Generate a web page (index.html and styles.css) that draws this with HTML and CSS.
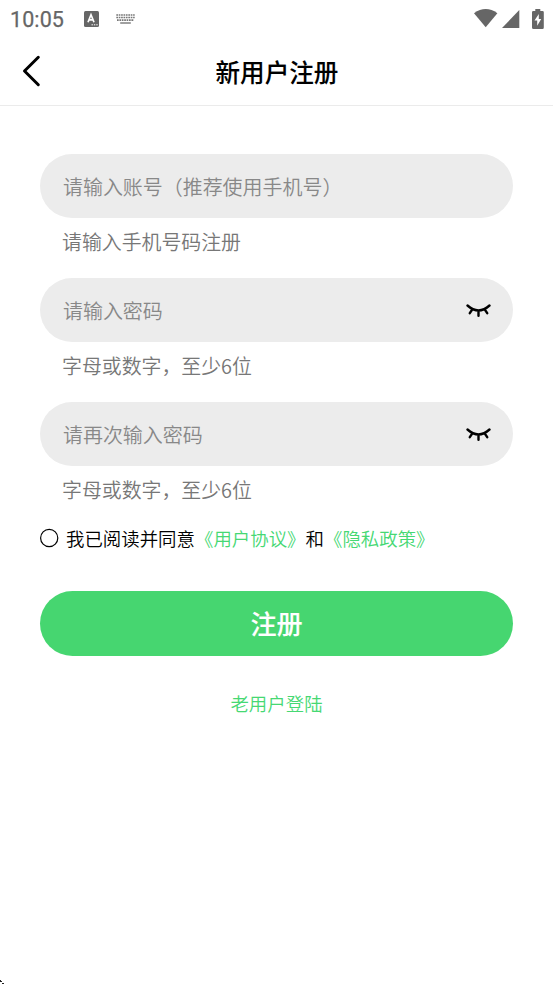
FILE: index.html
```html
<!DOCTYPE html>
<html lang="zh-CN">
<head>
<meta charset="utf-8">
<title>新用户注册</title>
<link rel="stylesheet" href="styles.css">
</head>
<body>
<div class="screen">
  <div class="status">
    <span class="clock">10:05</span>
    <svg class="ime" width="15" height="16" viewBox="0 0 15 16"><rect width="15" height="16" rx="1.5" fill="#666"/><path d="M4 11.3 7 3.8 10 11.3M5.2 8.8h3.6" fill="none" stroke="#fff" stroke-width="1.7"/><path d="M7.5 13.8h1.4m1 0h1.4m1 0h1.4" stroke="#fff"/></svg>
    <svg class="keys" width="19" height="10" viewBox="0 0 19 10" fill="none" stroke="#777"><path d="M.3 1h18.4M.3 3.5h18.4M1 6.1h17" stroke-width="1.6" stroke-dasharray="1.7 .7"/><path d="M4.2 9h10.6" stroke-width="1.4"/></svg>
    <svg class="wifi" width="24" height="19" viewBox="0 0 24 19"><path d="M0 4.2Q11.7-4.2 23.4 4.2L11.7 18.3Z" fill="#666"/></svg>
    <svg class="signal" width="18" height="18" viewBox="0 0 18 18"><path d="M17.3 0v18H0Z" fill="#666"/></svg>
    <svg class="battery" width="12" height="20" viewBox="0 0 12 20"><path d="M3.3 0h5v2H10.5Q11.8 2 11.8 3.2V18.5Q11.8 20 10.5 20H1.5Q0 20 0 18.5V3.2Q0 2 1.3 2h2Z" fill="#666"/><path d="M6.8 5 2.5 11.5h2.7v5.2L9.2 10H6.8Z" fill="#fff"/></svg>
  </div>
  <header class="bar">
    <svg class="back" width="20" height="32" viewBox="0 0 20 32"><path d="M16.3 2.3 2.5 16l13.8 13.7" fill="none" stroke="#000" stroke-width="3" stroke-linecap="round" stroke-linejoin="round"/></svg>
    <h1>新用户注册</h1>
  </header>
  <main>
    <div class="field"><span>请输入账号（推荐使用手机号）</span></div>
    <p class="hint">请输入手机号码注册</p>
    <div class="field"><span>请输入密码</span><svg class="eye" width="25" height="14" viewBox="0 0 25 14"><path d="M1.5 1.5Q12.5 11.3 23.5 1.5M6 5.8 3.8 9.2M12.5 6.7V11.7M19 5.8 21.2 9.2" fill="none" stroke="#000" stroke-width="2.4" stroke-linecap="round"/></svg></div>
    <p class="hint">字母或数字，至少6位</p>
    <div class="field"><span>请再次输入密码</span><svg class="eye" width="25" height="14" viewBox="0 0 25 14"><path d="M1.5 1.5Q12.5 11.3 23.5 1.5M6 5.8 3.8 9.2M12.5 6.7V11.7M19 5.8 21.2 9.2" fill="none" stroke="#000" stroke-width="2.4" stroke-linecap="round"/></svg></div>
    <p class="hint">字母或数字，至少6位</p>
    <div class="agree">
      <svg width="19" height="20" viewBox="0 0 19 20"><circle cx="9.2" cy="10" r="8.6" fill="none" stroke="#000" stroke-width="1.2"/></svg>
      <span>我已阅读并同意<a>《用户协议》</a>和<a>《隐私政策》</a></span>
    </div>
    <div class="submit">注册</div>
    <a class="login">老用户登陆</a>
  </main>
  <svg class="corner" width="4" height="4" viewBox="0 0 4 4"><path d="M0 0h1v1h1v1H0ZM2 3h2v1H2Z" fill="#222"/></svg>
</div>
</body>
</html>
```
FILE: styles.css
```css
* { box-sizing: border-box; }
body {
  margin: 0;
  background: #fff;
  color: #000;
  font-family: "Noto Sans CJK SC", sans-serif;
  font-weight: 350;
}
.screen {
  position: relative;
  height: 984px;
  overflow: hidden;
}
.status {
  display: flex;
  align-items: center;
  height: 37px;
  padding: 0 10px;
}
.clock {
  width: 74px;
  padding-top: 1px;
  color: #666;
  font: 400 21.5px/37px Roboto, sans-serif;
  letter-spacing: .1px;
  -webkit-text-stroke: .25px #666;
}
.keys { margin-left: 17px; }
.wifi { margin-left: auto; }
.signal { margin-left: 4px; }
.battery { margin: 0 -1px 0 12px; }
.bar {
  display: flex;
  align-items: center;
  height: 69px;
  padding: 0 22px;
  border-bottom: 1px solid #ebebeb;
}
h1 {
  flex: 1;
  margin: 0 19px 0 0;
  font-size: 24.58px;
  font-weight: 500;
  line-height: 36px;
  text-align: center;
  -webkit-text-stroke: .1px #000;
}
main {
  display: flex;
  flex-direction: column;
  padding: 48px 40px 0;
}
.field {
  display: flex;
  align-items: center;
  justify-content: space-between;
  height: 64px;
  padding: 0 22px 0 23px;
  border-radius: 32px;
  background: #ececec;
  color: #888;
  font-size: 19.97px;
}
.hint {
  height: 60px;
  margin: 0;
  padding: 9px 22px 0;
  color: #777;
  font-size: 19.9px;
  line-height: 30px;
}
.eye {
  margin-top: 1px;
}
.agree {
  display: flex;
  align-items: center;
  gap: 7px;
  height: 28px;
  margin-top: -2px;
  font-size: 18.43px;
  line-height: 28px;
}
.agree a, .login { color: #46d873; }
.submit {
  height: 64.5px;
  margin-top: 39px;
  border-radius: 33px;
  background: #46d670;
  color: #fff;
  font-size: 26.1px;
  font-weight: 500;
  line-height: 64px;
  text-align: center;
  -webkit-text-stroke: .1px #fff;
}
.login {
  margin-top: 33px;
  font-size: 18.43px;
  line-height: 28px;
  text-align: center;
}
.corner {
  position: absolute;
  bottom: 0;
  left: 0;
}
```
